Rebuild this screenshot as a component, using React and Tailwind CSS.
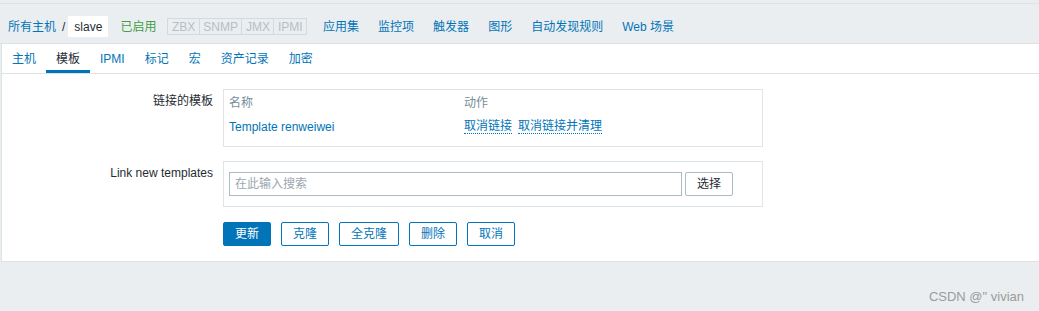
export default function App() {
  const navLinks = ["应用集", "监控项", "触发器", "图形", "自动发现规则", "Web 场景"];
  const tabs = ["主机", "模板", "IPMI", "标记", "宏", "资产记录", "加密"];
  const tags = ["ZBX", "SNMP", "JMX", "IPMI"];
  return (
    <div className="relative h-[311px] w-full overflow-hidden bg-[#ebeef0] font-['Liberation_Sans','Noto_Sans_CJK_SC',sans-serif] text-[12px] leading-[14px] text-[#1f2c33]">
      <div className="h-[3px]" />
      <header className="flex h-[41px] items-center border-y border-[#dde2e5] pl-[8px] pt-[6px]">
        <a className="text-[#0275b8]">所有主机</a>
        <span className="ml-[6px] mr-[3px]">/</span>
        <span className="flex h-[21px] items-center bg-white px-[6px]">slave</span>
        <span className="ml-[12px] text-[#429e47]">已启用</span>
        <div className="ml-[11px] flex h-[17px] border border-[#d3d9dc]">
          {tags.map((t, i) => (
            <span
              key={t}
              className={
                "flex items-center px-[3.5px] text-[#b4c0c6] " +
                (i < tags.length - 1 ? "border-r border-[#d3d9dc]" : "")
              }
            >
              {t}
            </span>
          ))}
        </div>
        <nav className="ml-[16px] flex gap-[19px] text-[#0275b8]">
          {navLinks.map((l) => (
            <a key={l}>{l}</a>
          ))}
        </nav>
      </header>

      <div className="ml-[1px] border-b border-l border-[#dde2e5] bg-white">
        <div className="flex h-[30px] border-b border-[#dde2e5]">
          {tabs.map((t) => (
            <div
              key={t}
              className={
                "flex items-center px-[10px] " +
                (t === "模板"
                  ? "border-b-[3px] border-[#0275b8] pt-[3px] text-[#1f2c33]"
                  : "text-[#0275b8]")
              }
            >
              {t}
            </div>
          ))}
        </div>

        <div className="grid grid-cols-[211px_540px] gap-x-[10px] pb-[15px] pt-[15px]">
          <div className="pt-[5px] text-right">链接的模板</div>
          <div className="border border-[#dfe4e7] px-[5px] pb-[12px] pt-[6px]">
            <div className="grid grid-cols-[235px_1fr] text-[#768d99]">
              <span>名称</span>
              <span>动作</span>
            </div>
            <div className="mt-[10px] grid grid-cols-[235px_1fr]">
              <a className="text-[#0275b8]">Template renweiwei</a>
              <div className="flex gap-[6px] text-[#0275b8]">
                <a className="border-b border-dotted border-[#0275b8] leading-[13px]">取消链接</a>
                <a className="border-b border-dotted border-[#0275b8] leading-[13px]">取消链接并清理</a>
              </div>
            </div>
          </div>

          <div className="mt-[14px] pt-[5px] text-right">Link new templates</div>
          <div className="mt-[14px] flex items-center gap-[3px] border border-[#dfe4e7] px-[5px] py-[10px]">
            <input
              className="h-[24px] w-[453px] border border-[#acbbc2] px-[5px] text-[12px] outline-none placeholder:text-[#9aa7ae]"
              placeholder="在此输入搜索"
            />
            <button className="h-[24px] w-[48px] rounded-[2px] border border-[#acbbc2] bg-white text-[12px] text-[#1f2c33]">
              选择
            </button>
          </div>

          <div />
          <div className="mt-[15px] flex gap-[10px]">
            <button className="h-[24px] w-[48px] rounded-[2px] border border-[#0275b8] bg-[#0275b8] text-[12px] text-white">
              更新
            </button>
            <button className="h-[24px] w-[48px] rounded-[2px] border border-[#0275b8] bg-white text-[12px] text-[#0275b8]">
              克隆
            </button>
            <button className="h-[24px] w-[60px] rounded-[2px] border border-[#0275b8] bg-white text-[12px] text-[#0275b8]">
              全克隆
            </button>
            <button className="h-[24px] w-[48px] rounded-[2px] border border-[#0275b8] bg-white text-[12px] text-[#0275b8]">
              删除
            </button>
            <button className="h-[24px] w-[48px] rounded-[2px] border border-[#0275b8] bg-white text-[12px] text-[#0275b8]">
              取消
            </button>
          </div>
        </div>
      </div>

      <div className="absolute bottom-[7px] right-[15px] text-[13px] leading-[15px] text-[#9b9b9b]">
        CSDN @" vivian
      </div>
    </div>
  );
}
